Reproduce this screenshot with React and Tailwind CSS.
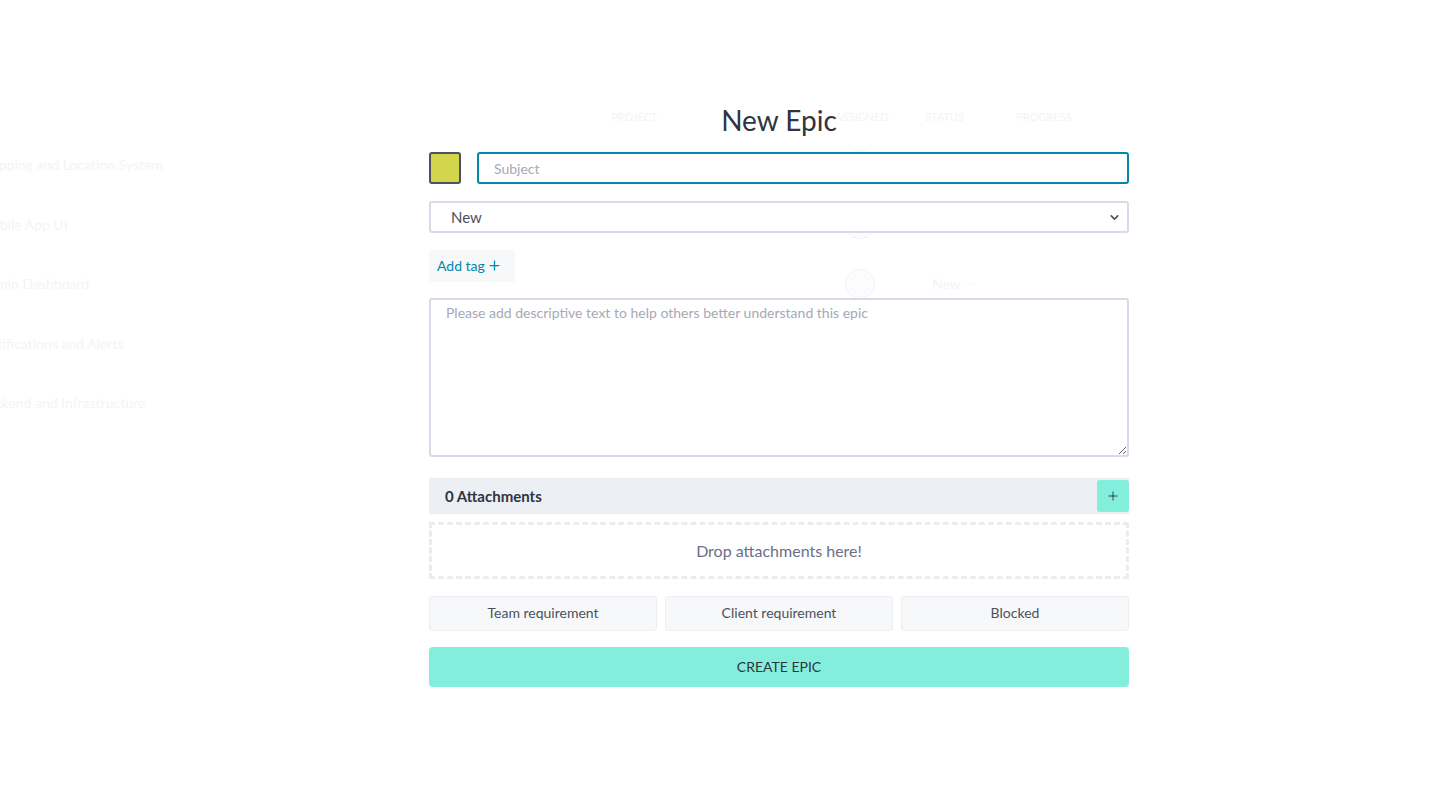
import { Plus, ChevronDown } from 'lucide-react';

const rows = [
  { name: 'Mapping and Location System' },
  { name: 'Mobile App UI' },
  { name: 'Admin Dashboard' },
  { name: 'Notifications and Alerts' },
  { name: 'Backend and Infrastructure' },
];

function FaintBackground() {
  return (
    <div className="absolute inset-0 overflow-hidden text-[#f3f4f6] pointer-events-none">
      {/* Table header behind the lightbox */}
      <div className="flex h-[24px] mt-[105px] text-[11px] uppercase items-center">
        <span className="ml-[611px] w-[224px]">Project</span>
        <span className="w-[90px]">Assigned</span>
        <span className="w-[91px]">Status</span>
        <span>Progress</span>
      </div>
      <div className="flex flex-col mt-[6px]">
        {rows.map((row) => (
          <div key={row.name} className="flex items-center h-[59.5px] text-[14px]">
            <span className="ml-[-21px] w-[866px]">{row.name}</span>
            <span className="w-[30px] h-[30px] rounded-full bg-[#fcfcfd] border border-[#f4f4f6]" />
            <span className="ml-[57px] flex items-center gap-1">
              New
              <ChevronDown className="w-3 h-3" />
            </span>
          </div>
        ))}
      </div>
    </div>
  );
}

export default function App() {
  return (
    <div
      className="relative min-h-screen bg-white overflow-hidden"
      style={{ fontFamily: 'Lato, "Noto Sans", sans-serif' }}
    >
      <FaintBackground />

      <div className="relative w-[700px] ml-[429px] pt-[103px] pb-[98px]">
        <h2 className="text-center text-[28px] leading-[34px] text-[#2f3441]">New Epic</h2>

        {/* Color + subject */}
        <div className="flex gap-4 mt-[15px] h-8">
          <button className="w-8 h-8 shrink-0 bg-[#d3d54b] border-2 border-[#4b5160] rounded-[3px]" />
          <input
            className="flex-1 h-8 bg-white border-2 border-[#0089a6] rounded-[3px] px-[15px] text-[14px] text-[#2f3441] placeholder:text-[#a6a9b6] outline-none"
            placeholder="Subject"
          />
        </div>

        {/* Status select */}
        <div className="relative mt-[17px] h-8">
          <select className="w-full h-8 appearance-none bg-white border-2 border-[#d8dbe7] rounded-[3px] pl-5 text-[15px] text-[#4b5160] outline-none">
            <option>New</option>
          </select>
          <ChevronDown className="absolute right-[8px] top-[10px] w-[13px] h-[13px] text-[#4b5160]" strokeWidth={3} />
        </div>

        {/* Tags */}
        <div className="mt-[17px] h-8">
          <button className="h-8 pl-2 pr-[13px] bg-[#f7f8fa] rounded-[3px] flex items-center pb-[2px] text-[14px] text-[#0089a6]">
            Add tag
            <Plus className="w-[15px] h-[15px] ml-[2px]" strokeWidth={2} />
          </button>
        </div>

        {/* Description */}
        <textarea
          className="block w-full mt-4 h-[159px] bg-white border-2 border-[#d8dbe7] rounded-[3px] px-[15px] py-[2px] text-[14px] text-[#2f3441] placeholder:text-[#a6a9b6] outline-none"
          placeholder="Please add descriptive text to help others better understand this epic"
        />

        {/* Attachments */}
        <div className="mt-[21px] h-9 bg-[#eceff3] flex items-center justify-between pl-4">
          <span className="text-[15px] font-bold text-[#2f3441]">0 Attachments</span>
          <button className="w-8 h-8 bg-[#83eedc] rounded-[3px] flex items-center justify-center text-[#2f3441]">
            <Plus className="w-[14px] h-[14px]" strokeWidth={1.6} />
          </button>
        </div>
        <div className="mt-2 h-[57px] border-[3px] border-dashed border-[#eaecf0] flex items-center justify-center text-[16px] text-[#6b6e88]">
          Drop attachments here!
        </div>

        {/* Flags */}
        <div className="grid grid-cols-3 gap-2 mt-[17px]">
          {['Team requirement', 'Client requirement', 'Blocked'].map((label) => (
            <button
              key={label}
              className="h-[35px] pb-[2px] bg-[#f7f8fa] border border-[#eceef2] rounded-[3px] text-[14px] text-[#4b5160]"
            >
              {label}
            </button>
          ))}
        </div>

        <button className="w-full mt-4 h-10 pb-[2px] bg-[#83eedc] rounded-[4px] text-[14px] uppercase text-[#2f3441]">
          Create Epic
        </button>
      </div>
    </div>
  );
}
